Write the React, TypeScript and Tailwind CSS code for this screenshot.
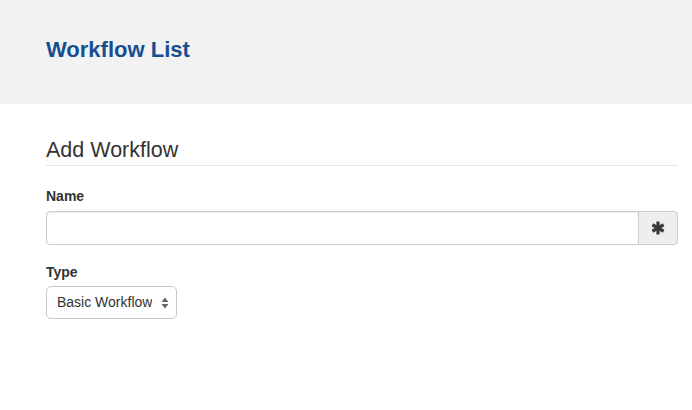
import React from 'react';

const font = { fontFamily: '"Liberation Sans", Arial, Helvetica, sans-serif' };

const AsteriskIcon = () => (
  <svg width="14" height="14" viewBox="0 0 14 14" aria-hidden="true">
    <g stroke="#3a3a3a" strokeWidth="3.2" strokeLinecap="butt">
      <line x1="7" y1="0.5" x2="7" y2="13.5" />
      <line x1="1.4" y1="3.75" x2="12.6" y2="10.25" />
      <line x1="1.4" y1="10.25" x2="12.6" y2="3.75" />
    </g>
  </svg>
);

const UpDown = () => (
  <svg width="8" height="12" viewBox="0 0 8 12" aria-hidden="true">
    <path d="M4 0.5 L7.5 5 L0.5 5 Z" fill="#666" />
    <path d="M4 11.5 L7.5 7 L0.5 7 Z" fill="#666" />
  </svg>
);

const App = () => {
  return (
    <div className="min-h-[410px] bg-white text-[#333]" style={font}>
      {/* Header */}
      <header className="h-[104px] bg-[#f2f2f2] pl-[46px] pt-[38px]">
        <h1 className="text-[22px] leading-[24px] font-bold text-[#154f91]">Workflow List</h1>
      </header>

      {/* Form */}
      <main className="pl-[46px] pr-[14px] pt-[34px]">
        <h3 className="text-[21.5px] leading-[24px] pb-[3px] border-b border-[#e5e5e5]">Add Workflow</h3>

        <div className="mt-[20px]">
          <label className="block text-[14px] leading-[20px] font-bold mb-[5px]">Name</label>
          <div className="flex h-[34px]">
            <input
              type="text"
              className="flex-1 min-w-0 border border-[#ccc] rounded-l-[4px] px-3 text-[14px] shadow-[inset_0_1px_1px_rgba(0,0,0,0.075)] outline-none"
            />
            <span className="w-[39px] flex items-center justify-center bg-[#eee] border border-l-0 border-[#ccc] rounded-r-[4px]">
              <AsteriskIcon />
            </span>
          </div>
        </div>

        <div className="mt-[17px]">
          <label className="block text-[14px] leading-[20px] font-bold mb-[4px]">Type</label>
          <div className="relative w-[131px] h-[33px]">
            <select
              className="appearance-none w-full h-full border border-[#c8c8c8] rounded-[5px] bg-white pl-[10px] pr-6 text-[14px] text-[#333] outline-none"
              style={font}
              defaultValue="basic"
            >
              <option value="basic">Basic Workflow</option>
            </select>
            <span className="pointer-events-none absolute right-[8px] top-1/2 -translate-y-1/2 flex">
              <UpDown />
            </span>
          </div>
        </div>
      </main>
    </div>
  );
};

export default App;
